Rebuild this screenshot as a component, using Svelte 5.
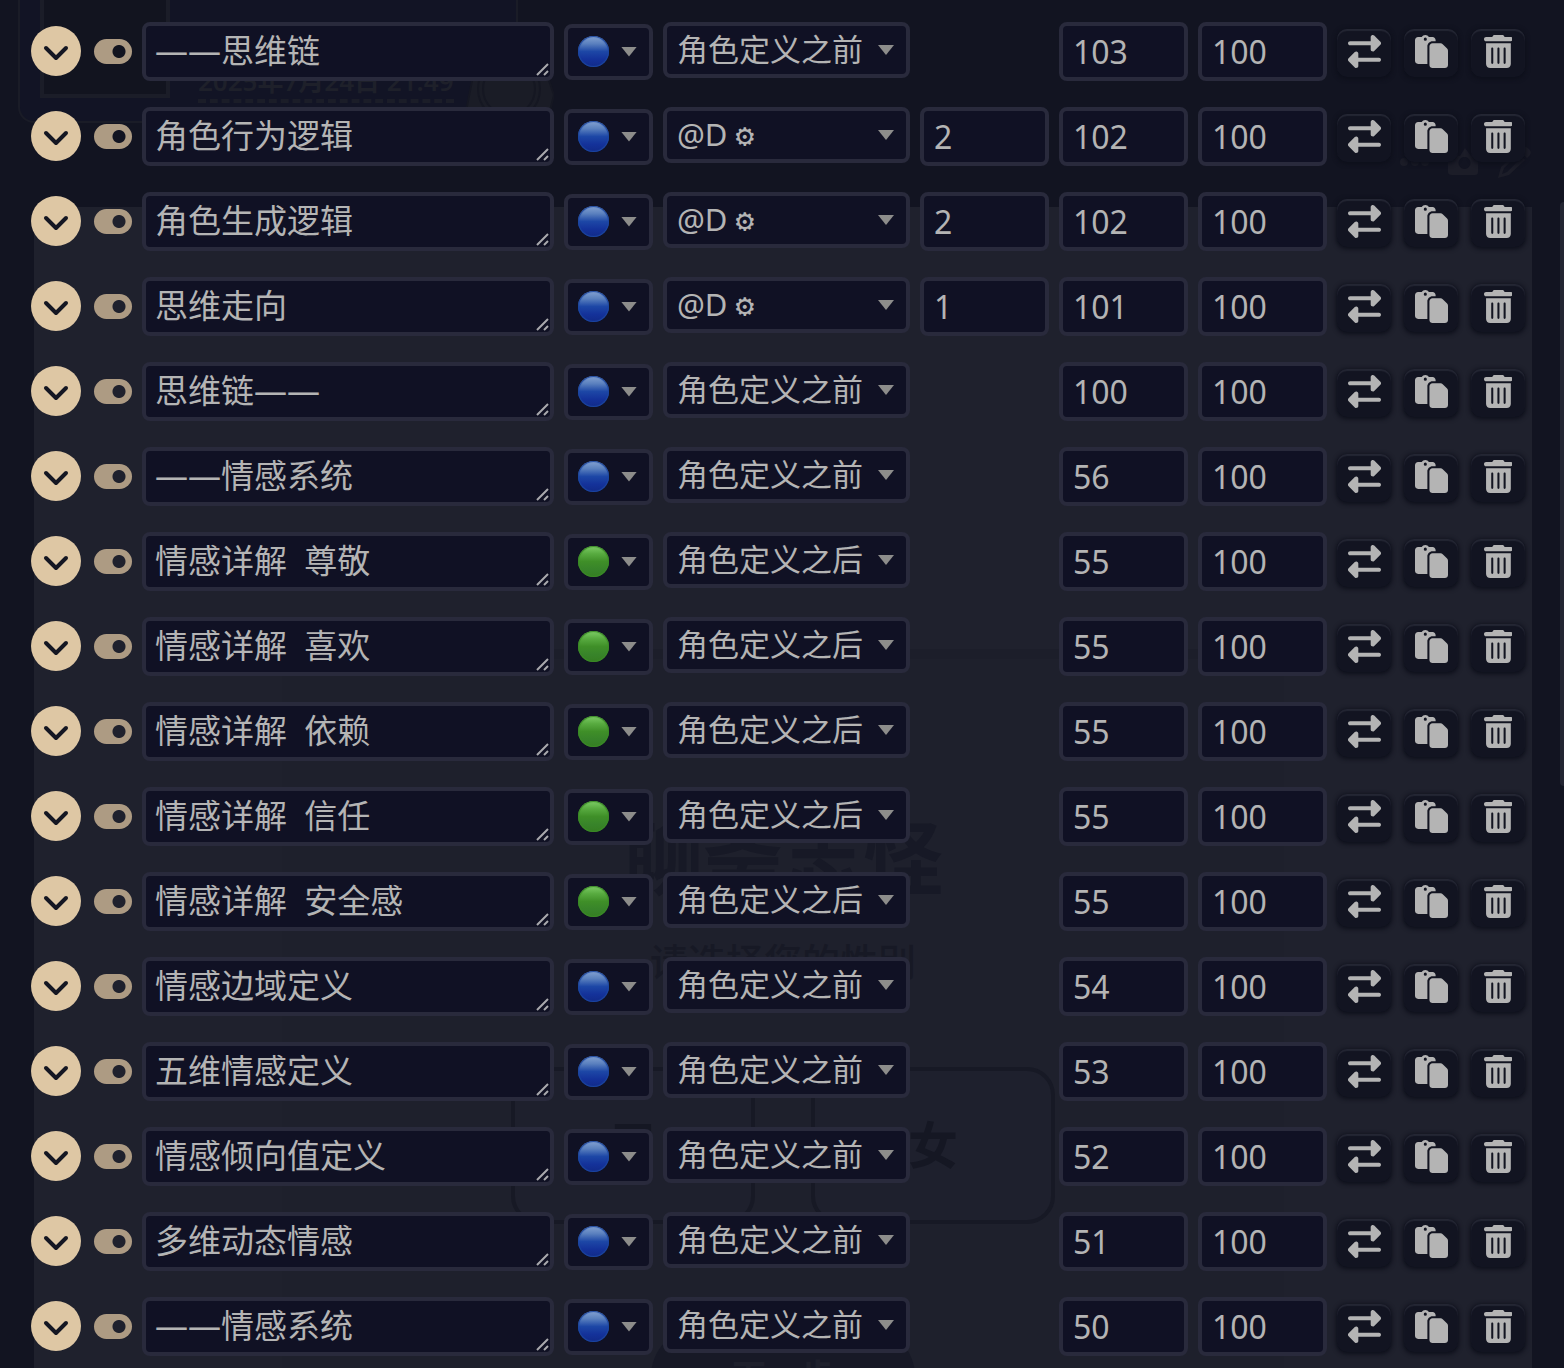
<script lang="ts">
	type Strategy = 'constant' | 'normal';
	type Position = 'before' | 'after' | 'depth';

	interface Entry {
		name: string;
		strategy: Strategy;
		position: Position;
		depth?: number;
		order: number;
		probability: number;
		enabled: boolean;
	}

	function entry(name: string, strategy: Strategy, position: Position, order: number, depth?: number): Entry {
		return { name, strategy, position, order, depth, probability: 100, enabled: true };
	}

	let entries = $state<Entry[]>([
		entry('——思维链', 'constant', 'before', 103),
		entry('角色行为逻辑', 'constant', 'depth', 102, 2),
		entry('角色生成逻辑', 'constant', 'depth', 102, 2),
		entry('思维走向', 'constant', 'depth', 101, 1),
		entry('思维链——', 'constant', 'before', 100),
		entry('——情感系统', 'constant', 'before', 56),
		entry('情感详解  尊敬', 'normal', 'after', 55),
		entry('情感详解  喜欢', 'normal', 'after', 55),
		entry('情感详解  依赖', 'normal', 'after', 55),
		entry('情感详解  信任', 'normal', 'after', 55),
		entry('情感详解  安全感', 'normal', 'after', 55),
		entry('情感边域定义', 'constant', 'before', 54),
		entry('五维情感定义', 'constant', 'before', 53),
		entry('情感倾向值定义', 'constant', 'before', 52),
		entry('多维动态情感', 'constant', 'before', 51),
		entry('——情感系统', 'constant', 'before', 50)
	]);

	function duplicate(index: number) {
		entries.splice(index + 1, 0, { ...entries[index] });
	}

	function remove(index: number) {
		entries.splice(index, 1);
	}
</script>

<div class="page">
	<div class="backdrop" aria-hidden="true">
		<div class="profile">
			<div class="avatar"></div>
			<div class="date">2025年7月24日 21:49</div>
			<svg class="seal" viewBox="0 0 88 60">
				<path d="M10 0h66l12 34-4 16H0z" />
				<circle cx="43" cy="28" r="26" />
				<circle cx="43" cy="28" r="31" />
			</svg>
		</div>
		<div class="message-tools">
			<svg viewBox="0 0 132 32">
				<circle cx="4" cy="14" r="4" />
				<circle cx="15" cy="14" r="4" />
				<circle cx="25" cy="14" r="4" />
				<path
					fill-rule="evenodd"
					d="M52 8h8l5-8 6 8h7v16q0 3-3 3H52q-4 0-4-3V11q0-3 4-3zM64 9a6 6 0 1 0 1 0z"
				/>
				<path fill-rule="evenodd" d="M98 30l3-11 16-15 8 8-16 15zM102 26l5-2 12-12-3-3-12 11zM119 2l4-3q3-1 6 2t1 6l-3 3z" />
			</svg>
		</div>
		<div class="message">
			<div class="story">
				<div class="story-title">聊斋志怪</div>
				<div class="story-sub">请选择您的性别</div>
				<div class="genders">
					<span>男</span>
					<span>女</span>
				</div>
				<div class="next">下一步</div>
			</div>
		</div>
		<div class="scroll-thumb"></div>
	</div>

	<main class="entries">
		{#each entries as item, i}
			<div class="entry">
				<div class="lead">
					<button class="expand" aria-label="展开条目">
						<svg viewBox="0 0 26 16"><path d="M3 3l10 10L23 3" /></svg>
					</button>
					<input class="switch" type="checkbox" aria-label="启用条目" bind:checked={item.enabled} />
				</div>

				<div class="title">
					<textarea rows="1" aria-label="标题" bind:value={item.name}></textarea>
					<svg class="grip" viewBox="0 0 14 14"><path d="M1 13L12 2M8 13l4-4" /></svg>
				</div>

				<div class="picker strategy">
					<select aria-label="触发策略" bind:value={item.strategy}>
						<option value="constant">🔵</option>
						<option value="normal">🟢</option>
					</select>
					<span class="dot" class:green={item.strategy === 'normal'}></span>
				</div>

				<div class="picker position">
					<select aria-label="位置" bind:value={item.position}>
						<option value="before">角色定义之前</option>
						<option value="after">角色定义之后</option>
						<option value="depth">@D ⚙</option>
					</select>
				</div>

				<div class="number">
					{#if item.position === 'depth'}
						<input type="text" inputmode="numeric" aria-label="深度" bind:value={item.depth} />
					{/if}
				</div>
				<div class="number">
					<input type="text" inputmode="numeric" aria-label="顺序" bind:value={item.order} />
				</div>
				<div class="number">
					<input type="text" inputmode="numeric" aria-label="触发概率" bind:value={item.probability} />
				</div>

				<div class="actions">
					<button aria-label="移动">
						<svg viewBox="0 0 512 512">
							<path
								d="M32 96l320 0V32c0-12.9 7.8-24.6 19.8-29.6s25.7-2.2 34.9 6.9l96 96c6 6 9.4 14.1 9.4 22.6s-3.4 16.6-9.4 22.6l-96 96c-9.2 9.2-22.9 11.9-34.9 6.9s-19.8-16.6-19.8-29.6V160L32 160c-17.7 0-32-14.3-32-32s14.3-32 32-32zM480 352c17.7 0 32 14.3 32 32s-14.3 32-32 32H160v64c0 12.9-7.8 24.6-19.8 29.6s-25.7 2.2-34.9-6.9l-96-96c-6-6-9.4-14.1-9.4-22.6s3.4-16.6 9.4-22.6l96-96c9.2-9.2 22.9-11.9 34.9-6.9s19.8 16.6 19.8 29.6l0 64H480z"
							/>
						</svg>
					</button>
					<button aria-label="复制" onclick={() => duplicate(i)}>
						<svg viewBox="0 0 512 512">
							<path
								d="M160 0c-23.7 0-44.4 12.9-55.4 32H48C21.5 32 0 53.5 0 80V400c0 26.5 21.5 48 48 48H192V176c0-44.2 35.8-80 80-80h48V80c0-26.5-21.5-48-48-48H215.4C204.4 12.9 183.7 0 160 0zM272 128c-26.5 0-48 21.5-48 48V448v16c0 26.5 21.5 48 48 48H464c26.5 0 48-21.5 48-48V243.9c0-12.7-5.1-24.9-14.1-33.9l-67.9-67.9c-9-9-21.2-14.1-33.9-14.1H320 272zM160 40a24 24 0 1 1 0 48 24 24 0 1 1 0-48z"
							/>
						</svg>
					</button>
					<button aria-label="删除" onclick={() => remove(i)}>
						<svg viewBox="0 0 448 512">
							<path
								d="M135.2 17.7C140.6 6.8 151.7 0 163.8 0H284.2c12.1 0 23.2 6.8 28.6 17.7L320 32h96c17.7 0 32 14.3 32 32s-14.3 32-32 32H32C14.3 96 0 81.7 0 64S14.3 32 32 32h96l7.2-14.3zM32 128H416V448c0 35.3-28.7 64-64 64H96c-35.3 0-64-28.7-64-64V128zm96 64c-8.8 0-16 7.2-16 16V432c0 8.8 7.2 16 16 16s16-7.2 16-16V208c0-8.8-7.2-16-16-16zm96 0c-8.8 0-16 7.2-16 16V432c0 8.8 7.2 16 16 16s16-7.2 16-16V208c0-8.8-7.2-16-16-16zm96 0c-8.8 0-16 7.2-16 16V432c0 8.8 7.2 16 16 16s16-7.2 16-16V208c0-8.8-7.2-16-16-16z"
							/>
						</svg>
					</button>
				</div>
			</div>
		{/each}
	</main>
</div>

<style>
	:global(body) {
		margin: 0;
		background: #121421;
		color: #b4b4b4;
		font-family: 'Noto Sans', 'Noto Sans CJK SC', sans-serif;
	}

	.page {
		position: relative;
		overflow: hidden;
	}

	/* dimmed chat behind the popup */
	.backdrop {
		position: absolute;
		inset: 0;
		overflow: hidden;
		color: #171925;
	}

	.profile {
		box-sizing: border-box;
		width: 500px;
		height: 123px;
		margin-left: 18px;
		padding-left: 20px;
		display: flex;
		align-items: flex-end;
		border: 2px solid #1a1c27;
		border-top: 0;
		border-radius: 0 0 16px 16px;
		background: #121425;
	}

	.avatar {
		box-sizing: border-box;
		flex: none;
		width: 130px;
		height: 98px;
		margin-bottom: 23px;
		border: 4px solid #1b1d28;
		border-top: 0;
		background: #12141f;
	}

	.date {
		flex: none;
		margin: 0 12px 18px 28px;
		border-bottom: 4px dashed #1b1d28;
		color: #1e202a;
		font-size: 26px;
		font-weight: 600;
		line-height: 36px;
	}

	.seal {
		flex: none;
		width: 88px;
		height: 60px;
		fill: #1a1c26;
		stroke: #151722;
		stroke-width: 2;
	}

	.seal circle {
		fill: none;
	}

	.message-tools {
		display: flex;
		justify-content: flex-end;
		height: 84px;
		padding-right: 32px;
	}

	.message-tools svg {
		width: 132px;
		height: 32px;
		margin-top: 25px;
		overflow: visible;
		fill: #1c1d28;
	}

	.message {
		margin: 0 32px 0 34px;
		padding: 442px 248px 0;
		background: #1f212d;
	}

	.story {
		height: 800px;
		padding-top: 148px;
		display: flex;
		flex-direction: column;
		align-items: center;
		border-top: 10px solid #1c1e2a;
		background: #1e202c;
	}

	.story-title {
		color: #171926;
		font-size: 80px;
		font-weight: 700;
		line-height: 100px;
	}

	.story-sub {
		margin-top: 24px;
		color: #171925;
		font-size: 38px;
		font-weight: 500;
		line-height: 60px;
	}

	.genders {
		display: flex;
		gap: 56px;
		margin-top: 76px;
	}

	.genders span {
		box-sizing: border-box;
		width: 244px;
		height: 157px;
		border: 4px solid #171925;
		border-radius: 28px;
		background: #1e202d;
		color: #151723;
		font-size: 50px;
		font-weight: 700;
		line-height: 149px;
		text-align: center;
	}

	.next {
		width: 264px;
		margin-top: 104px;
		border-radius: 48px;
		background: #171926;
		color: #1e202c;
		font-size: 34px;
		font-weight: 700;
		line-height: 96px;
		text-align: center;
	}

	.scroll-thumb {
		position: absolute;
		top: 202px;
		right: 0;
		width: 4px;
		height: 584px;
		border-radius: 4px 0 0 4px;
		background: #232532;
	}

	.entries {
		position: relative;
		display: grid;
		gap: 26px;
		padding: 22px 39px 12px 31px;
	}

	.entry {
		display: flex;
		align-items: center;
		gap: 10px;
		height: 59px;
	}

	.lead {
		display: flex;
		align-items: center;
		gap: 13px;
	}

	button {
		display: flex;
		align-items: center;
		justify-content: center;
		padding: 0;
		border: 0;
		cursor: pointer;
	}

	.expand {
		width: 50px;
		height: 50px;
		margin-bottom: 2px;
		border-radius: 50%;
		background: #dec7a4;
	}

	.expand svg {
		width: 26px;
		height: 16px;
		margin-top: 4px;
		fill: none;
		stroke: #141622;
		stroke-width: 4;
		stroke-linecap: round;
		stroke-linejoin: round;
	}

	.switch {
		appearance: none;
		width: 38px;
		height: 25px;
		margin: 0;
		border-radius: 13px;
		background: radial-gradient(circle at 13px 50%, transparent 6px, #ad9b83 7px);
		cursor: pointer;
	}

	.switch:checked {
		background: radial-gradient(circle at 25px 50%, transparent 6px, #ad9b83 7px);
	}

	textarea,
	select,
	.number input {
		box-sizing: border-box;
		width: 100%;
		margin: 0;
		border: 4px solid #292a3c;
		border-radius: 8px;
		background: #101124;
		color: #b4b4b4;
		font-family: inherit;
		outline: none;
	}

	.title {
		flex: 1;
		min-width: 0;
		display: grid;
	}

	.title > * {
		grid-area: 1 / 1;
	}

	textarea {
		height: 59px;
		padding: 3px 9px;
		font-size: 33px;
		line-height: 44px;
		resize: none;
		overflow: hidden;
		white-space: pre;
	}

	.grip {
		place-self: end;
		width: 14px;
		height: 14px;
		margin: 0 4px 5px;
		fill: none;
		stroke: #a9a9ad;
		stroke-width: 2;
		pointer-events: none;
	}

	.picker {
		flex: none;
		display: grid;
		align-items: center;
	}

	.picker > *,
	.picker::after {
		grid-area: 1 / 1;
	}

	.picker::after {
		content: '';
		justify-self: end;
		width: 16px;
		height: 10px;
		margin-right: 16px;
		background: #8d8d8b;
		clip-path: polygon(0 0, 100% 0, 50% 100%);
		pointer-events: none;
	}

	select {
		appearance: none;
		height: 56px;
		padding: 0 0 2px 10px;
		font-size: 31px;
	}

	.strategy {
		width: 89px;
	}

	.strategy select {
		font-size: 0;
	}

	.position {
		width: 247px;
		align-self: flex-start;
	}

	/* the mono face keeps the gear as small as a letter */
	.position select {
		font-family: 'Noto Sans', 'DejaVu Sans Mono', 'Noto Sans CJK SC', sans-serif;
	}

	.dot {
		width: 31px;
		height: 31px;
		margin-left: 14px;
		border-radius: 50%;
		background: linear-gradient(#86a4d2, #5a80be 25%, #1d47a6 50%, #14329a 75%, #122a88);
		box-shadow: inset 0 0 1px 1px #1c47a0;
		pointer-events: none;
	}

	.dot.green {
		background: linear-gradient(#7fce68, #58ab40 25%, #3f8f28 50%, #38842a 75%, #357d22);
		box-shadow: inset 0 0 1px 1px #3b8b26;
	}

	.number {
		flex: none;
		width: 129px;
	}

	.number input {
		display: block;
		height: 59px;
		padding: 0 10px 1px;
		font-size: 32px;
	}

	.actions {
		display: flex;
		gap: 13px;
		padding-top: 2px;
	}

	.actions button {
		width: 54px;
		height: 48px;
		border-radius: 10px;
		background: #121421;
		box-shadow:
			inset 0 2px 1px #242633,
			0 1px 4px 1px #0d0f1a;
	}

	.actions svg {
		height: 33px;
		margin-bottom: 2px;
		fill: #b4b4b4;
	}
</style>
